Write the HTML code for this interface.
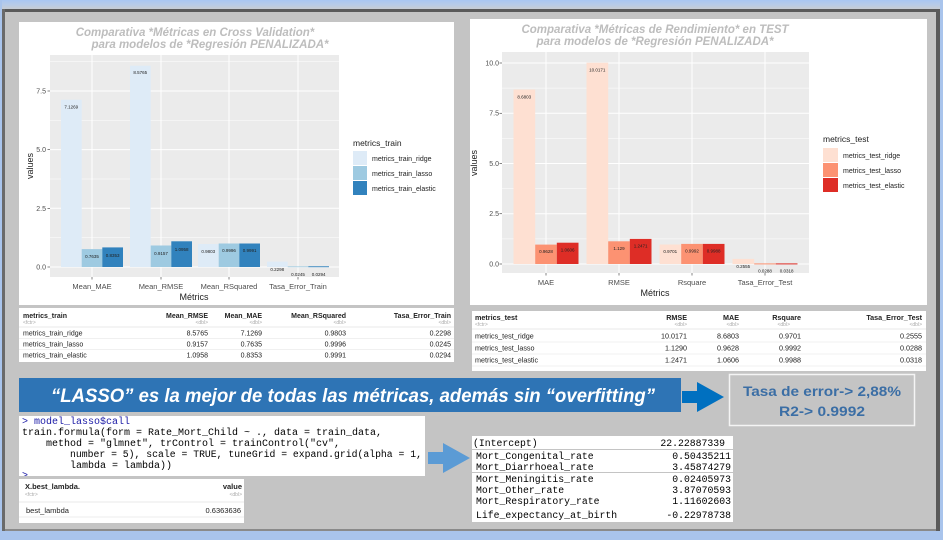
<!DOCTYPE html>
<html><head><meta charset="utf-8"><style>
html,body{margin:0;padding:0;background:#c3c3c3;}
svg{display:block;}
.t{font-family:"Liberation Sans",sans-serif;}
.m{font-family:"Liberation Mono",monospace;}
</style></head><body>
<svg width="943" height="540" viewBox="0 0 943 540" xmlns="http://www.w3.org/2000/svg">
<defs>
<linearGradient id="tb" x1="0" y1="0" x2="0" y2="1"><stop offset="0" stop-color="#a9c6f2"/><stop offset="0.5" stop-color="#b7cbe8"/><stop offset="1" stop-color="#c7ccd4"/></linearGradient>
</defs>
<rect width="943" height="540" fill="#c4c4c4"/>
<rect x="0" y="0" width="943" height="9" fill="url(#tb)"/>
<rect x="0" y="9" width="943" height="3" fill="#5a5a5a"/>
<rect x="0" y="531" width="943" height="9" fill="#a9c4ec"/>
<rect x="0" y="529" width="943" height="2" fill="#8a8a8a"/>
<rect x="0" y="0" width="2" height="540" fill="#a9c4ec"/>
<rect x="2" y="9" width="3" height="522" fill="#6a6a6a"/>
<rect x="940" y="0" width="3" height="540" fill="#a9c4ec"/>
<rect x="936" y="9" width="4" height="522" fill="#5a5a5a"/>

<rect x="19" y="22" width="435" height="283" fill="#fff"/>
<text class="t" x="195" y="36" text-anchor="middle" font-size="11.5" font-weight="bold" font-style="italic" fill="#bdbdbd">Comparativa *Métricas en Cross Validation*</text>
<text class="t" x="210" y="48" text-anchor="middle" font-size="11.5" font-weight="bold" font-style="italic" fill="#bdbdbd">para modelos de *Regresión PENALIZADA*</text>
<rect x="50" y="55" width="289" height="222" fill="#ebebeb"/>
<g stroke="#fff" stroke-width="0.5"><line x1="50" x2="339" y1="237.7" y2="237.7"/><line x1="50" x2="339" y1="179" y2="179"/><line x1="50" x2="339" y1="120.3" y2="120.3"/><line x1="50" x2="339" y1="61.6" y2="61.6"/></g>
<g stroke="#fff" stroke-width="1"><line x1="50" x2="339" y1="267" y2="267"/><line x1="50" x2="339" y1="208.3" y2="208.3"/><line x1="50" x2="339" y1="149.6" y2="149.6"/><line x1="50" x2="339" y1="91" y2="91"/>
<line x1="92" x2="92" y1="55" y2="277"/><line x1="161" x2="161" y1="55" y2="277"/><line x1="229" x2="229" y1="55" y2="277"/><line x1="298" x2="298" y1="55" y2="277"/></g>
<g>
<rect x="61" y="99.7" width="20.7" height="167.3" fill="#deebf7"/>
<rect x="81.7" y="249.1" width="20.6" height="17.9" fill="#9ecae1"/>
<rect x="102.3" y="247.4" width="20.7" height="19.6" fill="#3182bd"/>
<rect x="130" y="65.7" width="20.7" height="201.3" fill="#deebf7"/>
<rect x="150.7" y="245.5" width="20.6" height="21.5" fill="#9ecae1"/>
<rect x="171.3" y="241.3" width="20.7" height="25.7" fill="#3182bd"/>
<rect x="198" y="244" width="20.7" height="23" fill="#deebf7"/>
<rect x="218.7" y="243.5" width="20.6" height="23.5" fill="#9ecae1"/>
<rect x="239.3" y="243.5" width="20.7" height="23.5" fill="#3182bd"/>
<rect x="267" y="261.6" width="20.7" height="5.4" fill="#deebf7"/>
<rect x="287.7" y="266.4" width="20.6" height="0.8" fill="#9ecae1"/>
<rect x="308.3" y="266.3" width="20.7" height="0.9" fill="#3182bd"/>
</g>
<g class="t" font-size="4.5" text-anchor="middle" fill="#222">
<text x="71.3" y="108.5">7.1269</text><text x="92" y="258">0.7635</text><text x="112.6" y="257">0.8353</text>
<text x="140.3" y="74">8.5765</text><text x="161" y="255">0.9157</text><text x="181.6" y="251">1.0958</text>
<text x="208.3" y="253">0.9803</text><text x="229" y="252">0.9996</text><text x="249.6" y="252">0.9991</text>
<text x="277.3" y="271">0.2298</text><text x="298" y="276">0.0245</text><text x="318.6" y="276">0.0294</text>
</g>
<g class="t" font-size="7" fill="#4d4d4d" text-anchor="end"><text x="46" y="269.5">0.0</text><text x="46" y="210.8">2.5</text><text x="46" y="152">5.0</text><text x="46" y="93.5">7.5</text></g>
<g stroke="#333" stroke-width="0.6"><line x1="47.5" x2="50" y1="267" y2="267"/><line x1="47.5" x2="50" y1="208.3" y2="208.3"/><line x1="47.5" x2="50" y1="149.6" y2="149.6"/><line x1="47.5" x2="50" y1="91" y2="91"/>
<line x1="92" x2="92" y1="277" y2="279.5"/><line x1="161" x2="161" y1="277" y2="279.5"/><line x1="229" x2="229" y1="277" y2="279.5"/><line x1="298" x2="298" y1="277" y2="279.5"/></g>
<g class="t" font-size="7.5" fill="#4d4d4d" text-anchor="middle"><text x="92" y="289">Mean_MAE</text><text x="161" y="289">Mean_RMSE</text><text x="229" y="289">Mean_RSquared</text><text x="298" y="289">Tasa_Error_Train</text></g>
<text class="t" x="194" y="300" font-size="9" text-anchor="middle" fill="#222">Métrics</text>
<text class="t" x="33" y="166" font-size="9" text-anchor="middle" fill="#222" transform="rotate(-90 33 166)">values</text>
<text class="t" x="353" y="146" font-size="8.5" fill="#222">metrics_train</text>
<rect x="353" y="151" width="14" height="14" fill="#deebf7"/><rect x="353" y="166" width="14" height="14" fill="#9ecae1"/><rect x="353" y="181" width="14" height="14" fill="#3182bd"/>
<g class="t" font-size="7" fill="#222"><text x="372" y="161">metrics_train_ridge</text><text x="372" y="176">metrics_train_lasso</text><text x="372" y="191">metrics_train_elastic</text></g>

<rect x="470" y="19" width="457" height="286" fill="#fff"/>
<text class="t" x="655" y="33" text-anchor="middle" font-size="11.5" font-weight="bold" font-style="italic" fill="#bdbdbd">Comparativa *Métricas de Rendimiento* en TEST</text>
<text class="t" x="655" y="45" text-anchor="middle" font-size="11.5" font-weight="bold" font-style="italic" fill="#bdbdbd">para modelos de *Regresión PENALIZADA*</text>
<rect x="502" y="52" width="307" height="221" fill="#ebebeb"/>
<g stroke="#fff" stroke-width="0.5"><line x1="502" x2="809" y1="238.9" y2="238.9"/><line x1="502" x2="809" y1="188.6" y2="188.6"/><line x1="502" x2="809" y1="138.4" y2="138.4"/><line x1="502" x2="809" y1="88.1" y2="88.1"/></g>
<g stroke="#fff" stroke-width="1"><line x1="502" x2="809" y1="264" y2="264"/><line x1="502" x2="809" y1="213.75" y2="213.75"/><line x1="502" x2="809" y1="163.5" y2="163.5"/><line x1="502" x2="809" y1="113.25" y2="113.25"/><line x1="502" x2="809" y1="63" y2="63"/>
<line x1="546" x2="546" y1="52" y2="273"/><line x1="619" x2="619" y1="52" y2="273"/><line x1="692" x2="692" y1="52" y2="273"/><line x1="765" x2="765" y1="52" y2="273"/></g>
<g>
<rect x="513.5" y="89.5" width="21.7" height="174.5" fill="#fee0d2"/>
<rect x="535.2" y="244.6" width="21.6" height="19.4" fill="#fc9272"/>
<rect x="556.8" y="242.7" width="21.7" height="21.3" fill="#de2d26"/>
<rect x="586.5" y="62.7" width="21.7" height="201.3" fill="#fee0d2"/>
<rect x="608.2" y="241.3" width="21.6" height="22.7" fill="#fc9272"/>
<rect x="629.8" y="238.9" width="21.7" height="25.1" fill="#de2d26"/>
<rect x="659.5" y="244.5" width="21.7" height="19.5" fill="#fee0d2"/>
<rect x="681.2" y="243.9" width="21.6" height="20.1" fill="#fc9272"/>
<rect x="702.8" y="243.9" width="21.7" height="20.1" fill="#de2d26"/>
<rect x="732.5" y="258.9" width="21.7" height="5.1" fill="#fee0d2"/>
<rect x="754.2" y="263.4" width="21.6" height="1" fill="#fc9272"/>
<rect x="775.8" y="263.4" width="21.7" height="1" fill="#de2d26"/>
</g>
<g class="t" font-size="4.5" text-anchor="middle" fill="#222">
<text x="524.3" y="98.5">8.6803</text><text x="546" y="253">0.9628</text><text x="567.6" y="251.5">1.0606</text>
<text x="597.3" y="71.5">10.0171</text><text x="619" y="250">1.129</text><text x="640.6" y="247.5">1.2471</text>
<text x="670.3" y="253">0.9701</text><text x="692" y="252.5">0.9992</text><text x="713.6" y="252.5">0.9988</text>
<text x="743.3" y="268">0.2555</text><text x="765" y="272.5">0.0288</text><text x="786.6" y="272.5">0.0318</text>
</g>
<g class="t" font-size="7" fill="#4d4d4d" text-anchor="end"><text x="499" y="266.5">0.0</text><text x="499" y="216.2">2.5</text><text x="499" y="166">5.0</text><text x="499" y="115.7">7.5</text><text x="499" y="65.5">10.0</text></g>
<g stroke="#333" stroke-width="0.6"><line x1="499.5" x2="502" y1="264" y2="264"/><line x1="499.5" x2="502" y1="213.75" y2="213.75"/><line x1="499.5" x2="502" y1="163.5" y2="163.5"/><line x1="499.5" x2="502" y1="113.25" y2="113.25"/><line x1="499.5" x2="502" y1="63" y2="63"/>
<line x1="546" x2="546" y1="273" y2="275.5"/><line x1="619" x2="619" y1="273" y2="275.5"/><line x1="692" x2="692" y1="273" y2="275.5"/><line x1="765" x2="765" y1="273" y2="275.5"/></g>
<g class="t" font-size="7.5" fill="#4d4d4d" text-anchor="middle"><text x="546" y="285">MAE</text><text x="619" y="285">RMSE</text><text x="692" y="285">Rsquare</text><text x="765" y="285">Tasa_Error_Test</text></g>
<text class="t" x="655" y="296" font-size="9" text-anchor="middle" fill="#222">Métrics</text>
<text class="t" x="477" y="163" font-size="9" text-anchor="middle" fill="#222" transform="rotate(-90 477 163)">values</text>
<text class="t" x="823" y="142" font-size="8.5" fill="#222">metrics_test</text>
<rect x="823" y="148" width="15" height="14" fill="#fee0d2"/><rect x="823" y="163" width="15" height="14" fill="#fc9272"/><rect x="823" y="178" width="15" height="14" fill="#de2d26"/>
<g class="t" font-size="7" fill="#222"><text x="843" y="158">metrics_test_ridge</text><text x="843" y="173">metrics_test_lasso</text><text x="843" y="188">metrics_test_elastic</text></g>

<rect x="19" y="308" width="435" height="54" fill="#fff"/>
<line x1="19" x2="454" y1="327" y2="327" stroke="#e8e8e8"/>
<line x1="19" x2="454" y1="338.5" y2="338.5" stroke="#f0f0f0"/><line x1="19" x2="454" y1="349.5" y2="349.5" stroke="#f0f0f0"/>
<g class="t" font-size="7" fill="#222">
<text x="23" y="318" font-weight="bold">metrics_train</text>
<g text-anchor="end" font-weight="bold"><text x="208" y="318">Mean_RMSE</text><text x="262" y="318">Mean_MAE</text><text x="346" y="318">Mean_RSquared</text><text x="451" y="318">Tasa_Error_Train</text></g>
<g font-size="5" fill="#aaa"><text x="23" y="324">&lt;fctr&gt;</text><g text-anchor="end"><text x="208" y="324">&lt;dbl&gt;</text><text x="262" y="324">&lt;dbl&gt;</text><text x="346" y="324">&lt;dbl&gt;</text><text x="451" y="324">&lt;dbl&gt;</text></g></g>
<text x="23" y="335.5">metrics_train_ridge</text><text x="23" y="346.5">metrics_train_lasso</text><text x="23" y="357.5">metrics_train_elastic</text>
<g text-anchor="end">
<text x="208" y="335.5">8.5765</text><text x="262" y="335.5">7.1269</text><text x="346" y="335.5">0.9803</text><text x="451" y="335.5">0.2298</text>
<text x="208" y="346.5">0.9157</text><text x="262" y="346.5">0.7635</text><text x="346" y="346.5">0.9996</text><text x="451" y="346.5">0.0245</text>
<text x="208" y="357.5">1.0958</text><text x="262" y="357.5">0.8353</text><text x="346" y="357.5">0.9991</text><text x="451" y="357.5">0.0294</text>
</g></g>

<rect x="472" y="311" width="454" height="60" fill="#fff"/>
<line x1="472" x2="926" y1="329" y2="329" stroke="#e8e8e8"/>
<line x1="472" x2="926" y1="342" y2="342" stroke="#f0f0f0"/><line x1="472" x2="926" y1="354" y2="354" stroke="#f0f0f0"/><line x1="472" x2="926" y1="366" y2="366" stroke="#f0f0f0"/>
<g class="t" font-size="7.2" fill="#222">
<text x="475" y="320" font-weight="bold">metrics_test</text>
<g text-anchor="end" font-weight="bold"><text x="687" y="320">RMSE</text><text x="739" y="320">MAE</text><text x="801" y="320">Rsquare</text><text x="922" y="320">Tasa_Error_Test</text></g>
<g font-size="5" fill="#aaa"><text x="475" y="326">&lt;fctr&gt;</text><g text-anchor="end"><text x="687" y="326">&lt;dbl&gt;</text><text x="739" y="326">&lt;dbl&gt;</text><text x="790" y="326">&lt;dbl&gt;</text><text x="922" y="326">&lt;dbl&gt;</text></g></g>
<text x="475" y="338.5">metrics_test_ridge</text><text x="475" y="350.5">metrics_test_lasso</text><text x="475" y="362.5">metrics_test_elastic</text>
<g text-anchor="end">
<text x="687" y="338.5">10.0171</text><text x="739" y="338.5">8.6803</text><text x="801" y="338.5">0.9701</text><text x="922" y="338.5">0.2555</text>
<text x="687" y="350.5">1.1290</text><text x="739" y="350.5">0.9628</text><text x="801" y="350.5">0.9992</text><text x="922" y="350.5">0.0288</text>
<text x="687" y="362.5">1.2471</text><text x="739" y="362.5">1.0606</text><text x="801" y="362.5">0.9988</text><text x="922" y="362.5">0.0318</text>
</g></g>

<rect x="19" y="378" width="662" height="34" fill="#2e74b5"/>
<text class="t" x="51" y="402" font-size="19" font-weight="bold" font-style="italic" fill="#fff" textLength="604" lengthAdjust="spacingAndGlyphs">“LASSO” es la mejor de todas las métricas, además sin “overfitting”</text>
<polygon points="682,391 697,391 697,382 724,397 697,412 697,403 682,403" fill="#0070c0"/>
<rect x="729.5" y="374.5" width="185" height="51" fill="#c4c4c4" stroke="#f4f4f4" stroke-width="1.5"/>
<g class="t" font-weight="bold" font-size="14" fill="#3b6ea5" text-anchor="middle">
<text x="822" y="396" textLength="158" lengthAdjust="spacingAndGlyphs">Tasa de error-&gt; 2,88%</text>
<text x="822" y="416" textLength="86" lengthAdjust="spacingAndGlyphs">R2-&gt; 0.9992</text></g>

<rect x="19" y="416" width="406" height="60" fill="#fff"/>
<g class="m" font-size="10" fill="#000">
<text x="22" y="424" fill="#1a1aa6">&gt; model_lasso$call</text>
<text x="22" y="435">train.formula(form = Rate_Mort_Child ~ ., data = train_data,</text>
<text x="46" y="446">method = "glmnet", trControl = trainControl("cv",</text>
<text x="70" y="457" textLength="352" lengthAdjust="spacingAndGlyphs">number = 5), scale = TRUE, tuneGrid = expand.grid(alpha = 1,</text>
<text x="70" y="468">lambda = lambda))</text>
<text x="22" y="478" fill="#1a1aa6">&gt;</text>
</g>
<rect x="19" y="476" width="406" height="3" fill="#c4c4c4"/>

<rect x="19" y="479" width="225" height="44" fill="#fff"/>
<line x1="19" x2="244" y1="502" y2="502" stroke="#e8e8e8"/><line x1="19" x2="244" y1="517" y2="517" stroke="#eee"/>
<g class="t" font-size="7.5" fill="#222">
<text x="25" y="489" font-weight="bold">X.best_lambda.</text>
<text x="242" y="489" font-weight="bold" text-anchor="end">value</text>
<text x="25" y="496" font-size="5" fill="#aaa">&lt;fctr&gt;</text>
<text x="242" y="496" font-size="5" fill="#aaa" text-anchor="end">&lt;dbl&gt;</text>
<text x="26" y="513">best_lambda</text>
<text x="241" y="513" text-anchor="end">0.6363636</text>
</g>

<polygon points="428,452 443,452 443,443 470,458 443,473 443,464 428,464" fill="#5b9bd5"/>

<rect x="472" y="436" width="261" height="13" fill="#fff"/>
<rect x="472" y="450" width="261" height="22" fill="#fff"/>
<rect x="472" y="473" width="261" height="49" fill="#fff"/>
<g class="m" font-size="9.8" fill="#000">
<text x="473" y="446">(Intercept)</text><text x="725" y="446" text-anchor="end">22.22887339</text>
<text x="476" y="459">Mort_Congenital_rate</text><text x="731" y="459" text-anchor="end">0.50435211</text>
<text x="476" y="470">Mort_Diarrhoeal_rate</text><text x="731" y="470" text-anchor="end">3.45874279</text>
<text x="476" y="482">Mort_Meningitis_rate</text><text x="731" y="482" text-anchor="end">0.02405973</text>
<text x="476" y="493">Mort_Other_rate</text><text x="731" y="493" text-anchor="end">3.87070593</text>
<text x="476" y="504">Mort_Respiratory_rate</text><text x="731" y="504" text-anchor="end">1.11602603</text>
<text x="476" y="518">Life_expectancy_at_birth</text><text x="731" y="518" text-anchor="end">-0.22978738</text>
</g>
</svg>
</body></html>
